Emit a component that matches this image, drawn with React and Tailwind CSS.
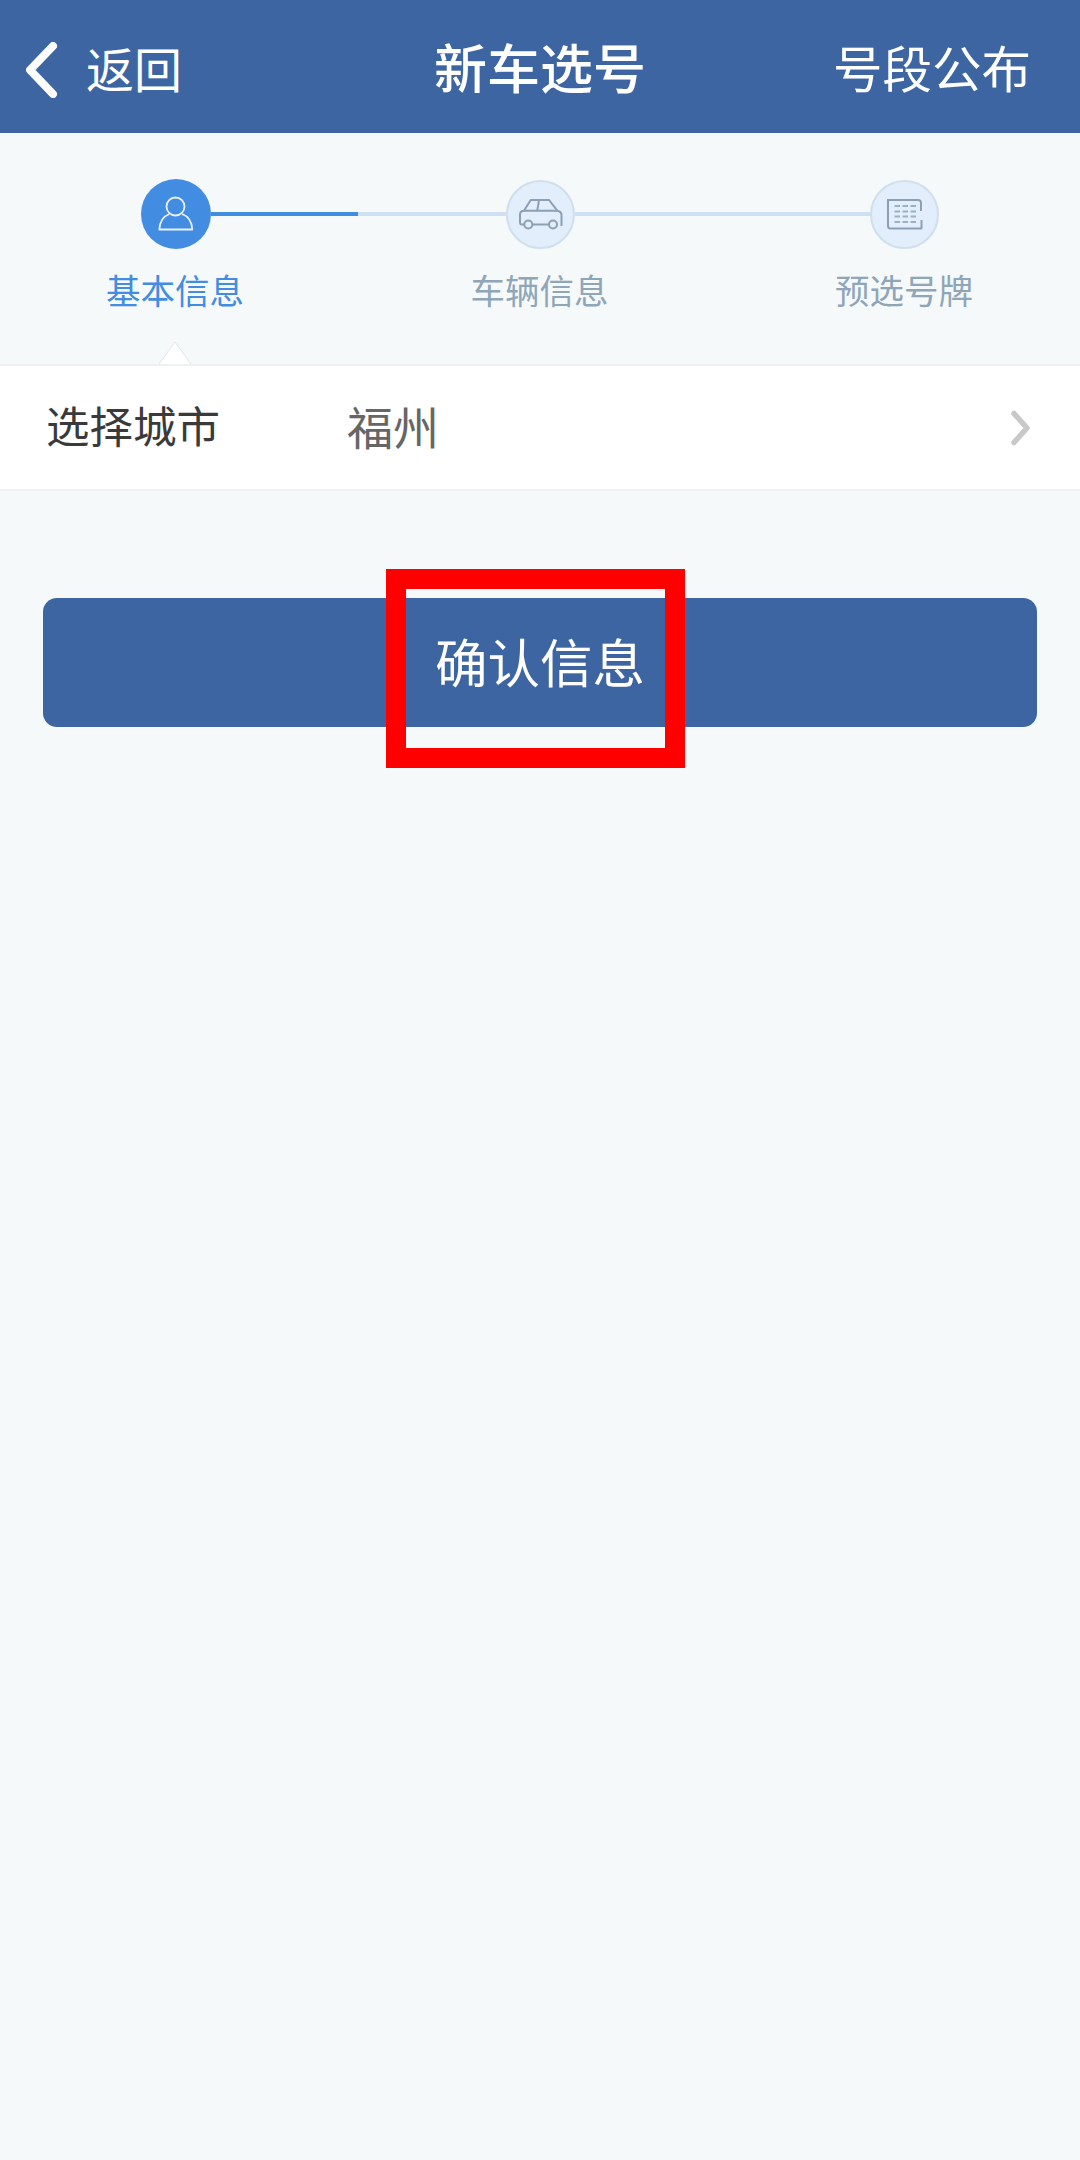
import React from 'react';

function PersonIcon() {
  return (
    <svg width="36" height="36" viewBox="0 0 36 36" fill="none" stroke="#e8f1fb" strokeWidth="1.8" strokeLinejoin="round">
      <circle cx="17.500" cy="10.500" r="9" />
      <path d="M11.500 18C6 20 1.800 25 1.300 33.500h33c-.5-8.500-4.700-13.500-10.300-15.500" />
    </svg>
  );
}

function CarIcon() {
  return (
    <svg width="44" height="31" viewBox="0 0 44 31" fill="none" stroke="#8da0b3" strokeWidth="2">
      <path d="M5.300 25.500H3C1.800 25.500 1 24.700 1 23.500V15.500C1 13.300 2.500 11.700 5 11.700L11.700 1H30l8.300 10.700c2.300.5 4.200 2 4.200 4.300V27" />
      <path d="M5 11.700H38.300M20 1l-1.700 10.700M13.300 25.500H30" />
      <circle cx="9.300" cy="25.500" r="4" />
      <circle cx="34" cy="25.500" r="4" />
    </svg>
  );
}

function PlateIcon() {
  return (
    <svg width="36" height="31" viewBox="0 0 36 31" fill="none">
      <path d="M35 29.500H3.500C2 29.500 1 28.500 1 27V1h30c1.800 0 3 1.200 3 3v8M34.500 21v8.500" stroke="#8da0b3" strokeWidth="2" />
      <path
        d="M7.500 7h5.500M15.500 7H21M23.500 7H29M7.500 12.500h5.500M15.500 12.500H21M23.500 12.500H29M7.500 17.500h5.500M15.500 17.500H21M23.500 17.500H29M7.500 23h5.500M15.500 23H21M23.500 23H29"
        stroke="#9db0c2"
        strokeWidth="1.800"
      />
    </svg>
  );
}

function StepCircle({ children }) {
  return (
    <div className="w-[69px] h-[69px] shrink-0 rounded-full bg-[#e2eefb] border-2 border-[#cfdfec] flex items-center justify-center">
      {children}
    </div>
  );
}

export default function App() {
  return (
    <div className="w-[1080px] min-h-[2160px] bg-[#f5f9fa] [font-family:'Noto_Sans_CJK_SC',sans-serif]">
      {/* header */}
      <div className="h-[133px] bg-[#3c65a2] flex items-center justify-between pl-[26px] pr-[49px] text-white">
        <div className="w-[300px] flex items-center">
          <svg className="mt-[7px]" width="34" height="56" viewBox="0 0 34 56" fill="none" stroke="#fff" strokeWidth="8" strokeLinecap="round" strokeLinejoin="round">
            <path d="M27 4 4 28l23 24" />
          </svg>
          <span className="ml-[26px] text-[48px] leading-none">返回</span>
        </div>
        <span className="text-[53px] leading-none font-medium">新车选号</span>
        <span className="w-[277px] text-right text-[49.5px] leading-none">号段公布</span>
      </div>

      {/* steps */}
      <div className="h-[231px] pt-[46px] relative">
        <div className="flex items-center pl-[141px] pr-[141px]">
          <div className="w-[70px] h-[70px] shrink-0 rounded-full bg-[#428ce2] flex items-center justify-center">
            <PersonIcon />
          </div>
          <div className="flex-1 h-[4px] bg-[#cfe0f2]">
            <div className="w-[147px] h-full bg-[#428ce2]" />
          </div>
          <StepCircle>
            <CarIcon />
          </StepCircle>
          <div className="flex-1 h-[4px] bg-[#cfe0f2]" />
          <StepCircle>
            <PlateIcon />
          </StepCircle>
        </div>
        <div className="flex justify-between pl-[95px] pr-[96px] mt-[15px] text-[34.5px] leading-[50px] text-[#8fa5b8]">
          <span className="w-[160px] text-center text-[#428ce2]">基本信息</span>
          <span className="w-[160px] text-center">车辆信息</span>
          <span className="w-[160px] text-center">预选号牌</span>
        </div>
        {/* pointer above the row */}
        <svg className="absolute left-[158px] bottom-[-1px]" width="34" height="24" viewBox="0 0 34 24" fill="#fff" stroke="#dfe6ea" strokeWidth="1">
          <path d="M1 23 17 1l16 22" />
        </svg>
      </div>

      {/* city row */}
      <div className="h-[127px] bg-white border-y-2 border-[#eef1f3] flex items-center pl-[46px] pr-[49px]">
        <span className="w-[301px] mb-[6px] text-[43.5px] leading-none text-[#3a3a3a]">选择城市</span>
        <span className="flex-1 mb-[6px] text-[46px] leading-none text-[#666666]">福州</span>
        <svg width="22" height="36" viewBox="0 0 22 36" fill="none" stroke="#c8c8c8" strokeWidth="5.500" strokeLinecap="round" strokeLinejoin="round">
          <path d="M5 3.500 18 18 5 32.500" />
        </svg>
      </div>

      {/* confirm button */}
      <div className="px-[43px] pt-[107px]">
        <div className="relative">
          <div className="h-[129px] rounded-[14px] bg-[#3c65a2] flex items-center justify-center text-white text-[52.5px] leading-none">
            <span className="mb-[5px]">确认信息</span>
          </div>
          <div className="absolute left-[343px] top-[-29px] w-[299px] h-[199px] border-[20px] border-[#ff0000]" />
        </div>
      </div>
    </div>
  );
}
